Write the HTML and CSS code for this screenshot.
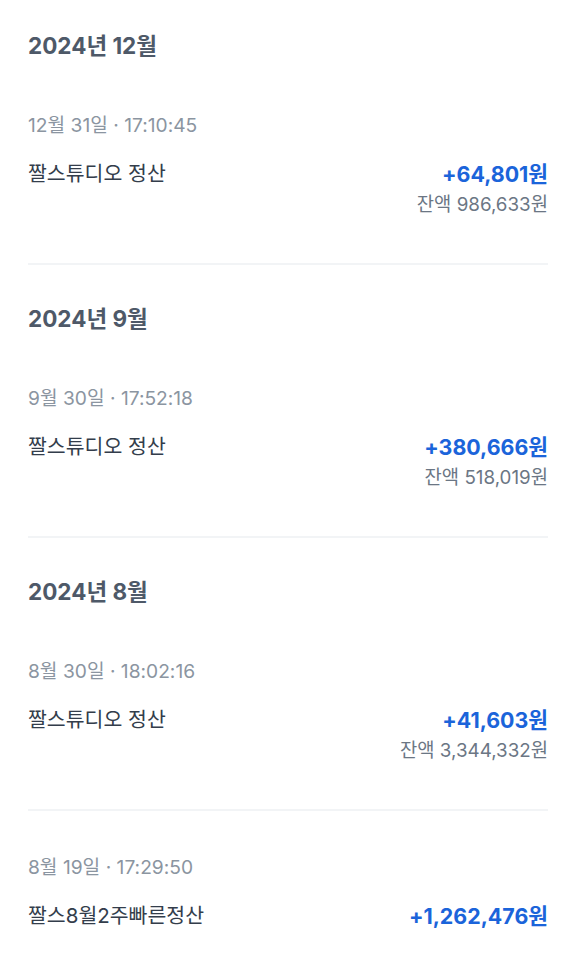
FILE: index.html
```html
<!DOCTYPE html>
<html>

<head>
    <title>정산 내역</title>
    <link rel="stylesheet" href="styles.css">
</head>

<body>
    <div class="list">
        <div class="month">
            <h2 class="month_title">2024년 12월</h2>
            <div class="item">
                <p class="item_date">12월 31일 · 17:10:45</p>
                <div class="item_row">
                    <span class="item_name">짤스튜디오 정산</span>
                    <span class="item_amount">+64,801원</span>
                </div>
                <p class="item_balance">잔액 986,633원</p>
            </div>
        </div>

        <div class="month">
            <h2 class="month_title">2024년 9월</h2>
            <div class="item">
                <p class="item_date">9월 30일 · 17:52:18</p>
                <div class="item_row">
                    <span class="item_name">짤스튜디오 정산</span>
                    <span class="item_amount">+380,666원</span>
                </div>
                <p class="item_balance">잔액 518,019원</p>
            </div>
        </div>

        <div class="month">
            <h2 class="month_title">2024년 8월</h2>
            <div class="item">
                <p class="item_date">8월 30일 · 18:02:16</p>
                <div class="item_row">
                    <span class="item_name">짤스튜디오 정산</span>
                    <span class="item_amount">+41,603원</span>
                </div>
                <p class="item_balance">잔액 3,344,332원</p>
            </div>
            <div class="item item_last">
                <p class="item_date">8월 19일 · 17:29:50</p>
                <div class="item_row">
                    <span class="item_name">짤스8월2주빠른정산</span>
                    <span class="item_amount">+1,262,476원</span>
                </div>
            </div>
        </div>
    </div>
</body>

</html>
```

FILE: styles.css
```css
body {
    margin: 0;
    background: #ffffff;
    font-family: "Inter", "Noto Sans CJK KR", sans-serif;
}

p, h2 {
    margin: 0;
}

.list {
    padding: 32px 29px 0 28px;
}

.month {
    margin-bottom: 40px;
}

.month_title {
    font-size: 22.5px;
    line-height: 28px;
    font-weight: 700;
    color: #4e5968;
    margin-bottom: 9px;
}

.item {
    padding: 44px 0 46px;
    border-bottom: 2px solid #f2f4f6;
}

.item_last {
    border-bottom: none;
}

.item_date {
    font-size: 19.2px;
    line-height: 24px;
    color: #8b95a1;
}

.item_row {
    display: flex;
    justify-content: space-between;
    align-items: center;
    margin-top: 24px;
}

.item_name {
    font-size: 20.5px;
    line-height: 26px;
    color: #333d4b;
}

.item_amount {
    font-size: 21.4px;
    line-height: 26px;
    font-weight: 700;
    color: #1b64da;
}

.item_balance {
    margin-top: 6px;
    font-size: 18.8px;
    line-height: 24px;
    color: #6b7684;
    text-align: right;
}
```
